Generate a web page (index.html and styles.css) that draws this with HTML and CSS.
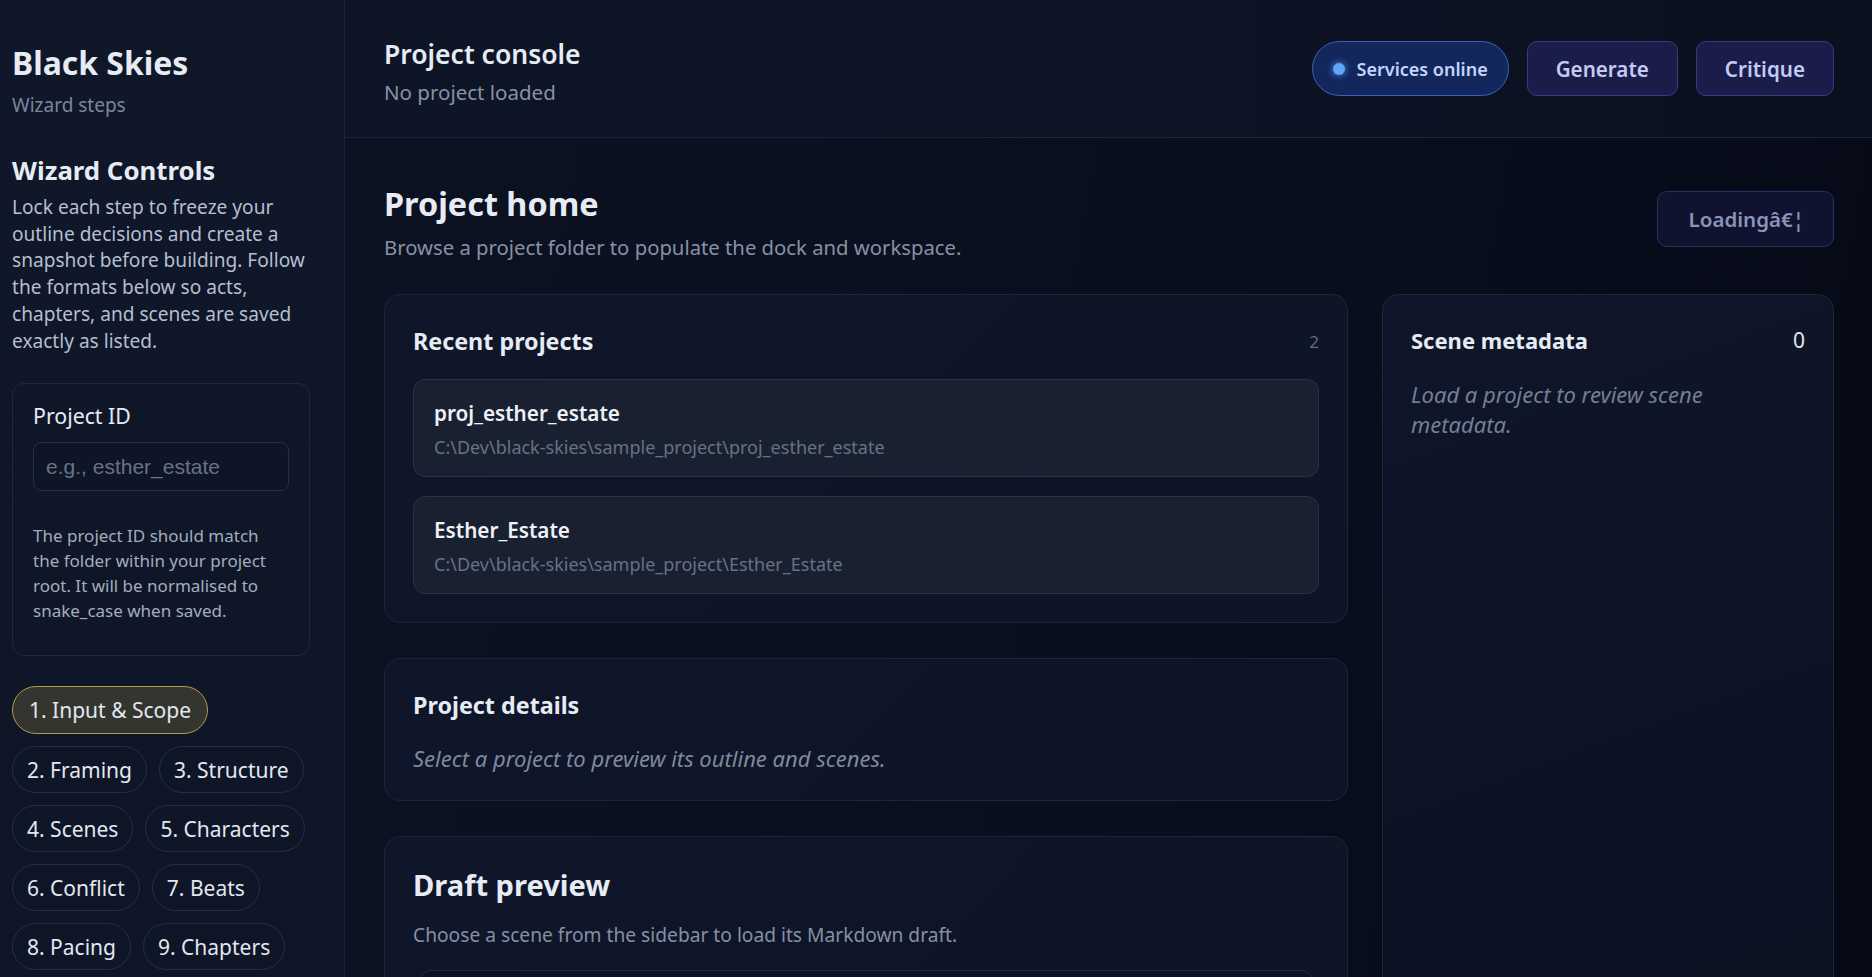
FILE: index.html
```html
<!DOCTYPE html>
<html lang="en">
<head>
<meta charset="utf-8">
<title>Black Skies</title>
<link rel="stylesheet" href="styles.css">
</head>
<body>
<div class="app">
  <aside class="sidebar">
    <h1 class="brand">Black Skies</h1>
    <div class="brand-sub">Wizard steps</div>
    <h2 class="side-title">Wizard Controls</h2>
    <p class="side-desc">Lock each step to freeze your outline decisions and create a snapshot before building. Follow the formats below so acts, chapters, and scenes are saved exactly as listed.</p>
    <div class="id-card">
      <label class="id-label" for="pid">Project ID</label>
      <input id="pid" class="id-input" type="text" placeholder="e.g., esther_estate">
      <p class="id-help">The project ID should match the folder within your project root. It will be normalised to snake_case when saved.</p>
    </div>
    <div class="steps">
      <span class="step active">1. Input &amp; Scope</span>
      <span class="step">2. Framing</span>
      <span class="step">3. Structure</span>
      <span class="step">4. Scenes</span>
      <span class="step">5. Characters</span>
      <span class="step">6. Conflict</span>
      <span class="step">7. Beats</span>
      <span class="step">8. Pacing</span>
      <span class="step">9. Chapters</span>
    </div>
  </aside>
  <main class="main">
    <header class="topbar">
      <div class="topbar-title">
        <div class="console-title">Project console</div>
        <div class="console-sub">No project loaded</div>
      </div>
      <div class="topbar-actions">
        <span class="status-pill"><span class="status-dot"></span>Services online</span>
        <button class="action-btn">Generate</button>
        <button class="action-btn">Critique</button>
      </div>
    </header>
    <section class="workspace">
      <div class="home-head">
        <div>
          <h2 class="home-title">Project home</h2>
          <p class="home-sub">Browse a project folder to populate the dock and workspace.</p>
        </div>
        <button class="loading-btn">Loading&acirc;&euro;&brvbar;</button>
      </div>
      <div class="home-grid">
        <div class="col-left">
          <div class="card recent">
            <div class="card-head">
              <h3 class="card-title">Recent projects</h3>
              <span class="count">2</span>
            </div>
            <div class="project-list">
              <div class="project-item">
                <div class="project-name">proj_esther_estate</div>
                <div class="project-path">C:\Dev\black-skies\sample_project\proj_esther_estate</div>
              </div>
              <div class="project-item">
                <div class="project-name">Esther_Estate</div>
                <div class="project-path">C:\Dev\black-skies\sample_project\Esther_Estate</div>
              </div>
            </div>
          </div>
          <div class="card details">
            <h3 class="card-title">Project details</h3>
            <p class="empty">Select a project to preview its outline and scenes.</p>
          </div>
          <div class="card draft">
            <h3 class="draft-title">Draft preview</h3>
            <p class="draft-sub">Choose a scene from the sidebar to load its Markdown draft.</p>
            <div class="draft-box"></div>
          </div>
        </div>
        <div class="card meta">
          <div class="card-head">
            <h3 class="meta-title">Scene metadata</h3>
            <span class="meta-count">0</span>
          </div>
          <p class="meta-empty">Load a project to review scene metadata.</p>
        </div>
      </div>
    </section>
  </main>
</div>
</body>
</html>
```

FILE: styles.css
```css
* { box-sizing: border-box; }
html, body { margin: 0; padding: 0; height: 100%; }
body {
  font-family: "Noto Sans", "Open Sans", sans-serif;
  background: #080c1a;
  color: #e2e8f0;
  overflow: hidden;
}
.app {
  display: grid;
  grid-template-columns: 345px 1fr;
  height: 100vh;
}
.sidebar {
  background: linear-gradient(180deg, #0f1729 0%, #0e1527 100%);
  border-right: 1px solid #1a2335;
  padding: 44px 34px 0 12px;
  overflow: hidden;
}
.brand {
  margin: 0;
  font-size: 31.9px;
  line-height: 38px;
  font-weight: 700;
  color: #e6ebf4;
}
.brand-sub {
  margin-top: 11px;
  font-size: 19px;
  line-height: 24px;
  color: #7a879c;
}
.side-title {
  margin: 38px 0 0;
  font-size: 25.8px;
  line-height: 30px;
  font-weight: 700;
  color: #e6ebf4;
}
.side-desc {
  margin: 9px 0 0;
  font-size: 19.1px;
  line-height: 26.7px;
  color: #b4bfd0;
}
.id-card {
  margin-top: 29px;
  border: 1px solid #1f293b;
  border-radius: 12px;
  padding: 18px 20px 32px;
  display: flex;
  flex-direction: column;
}
.id-label {
  font-size: 21.3px;
  line-height: 28px;
  color: #e6ebf4;
}
.id-input {
  margin-top: 12px;
  height: 49px;
  width: 100%;
  background: #0e1526;
  border: 1px solid #263146;
  border-radius: 8px;
  padding: 0 12px;
  font-family: "Liberation Sans", Arial, sans-serif;
  font-size: 21px;
  color: #e2e8f0;
}
.id-input::placeholder { color: #687385; }
.id-help {
  margin: 32px 0 0;
  max-width: 245px;
  font-size: 17px;
  line-height: 25px;
  color: #a3adbd;
}
.steps {
  margin-top: 30px;
  width: 320px;
  display: flex;
  flex-wrap: wrap;
  gap: 12px 12px;
}
.step {
  height: 47px;
  display: inline-flex;
  align-items: center;
  padding: 0 14px;
  border: 1px solid #243047;
  border-radius: 999px;
  font-size: 21px;
  color: #e2e8f0;
  white-space: nowrap;
}
.step.active {
  height: 48px;
  padding: 0 16px;
  background: #35352f;
  border-color: #b39a4a;
}
.main {
  display: flex;
  flex-direction: column;
  min-width: 0;
  background: linear-gradient(100deg, #0c1222 0%, #0a0f1e 45%, #060a17 100%);
}
.topbar {
  height: 138px;
  flex: none;
  display: flex;
  align-items: center;
  justify-content: space-between;
  padding: 0 38px 0 39px;
  border-bottom: 1px solid #1c2537;
  background: linear-gradient(90deg, #0e1527 0%, #0d1325 60%, #0b101e 100%);
}
.topbar-title {
  padding-top: 4px;
}
.console-title {
  font-size: 26.5px;
  line-height: 34px;
  font-weight: 600;
  color: #e6ebf4;
}
.console-sub {
  margin-top: 8px;
  font-size: 20.5px;
  line-height: 26px;
  color: #8792a6;
}
.topbar-actions {
  display: flex;
  align-items: center;
  gap: 18px;
}
.status-pill {
  height: 55px;
  display: inline-flex;
  align-items: center;
  gap: 12px;
  padding: 0 20px 0 20px;
  border-radius: 999px;
  background: #13275d;
  border: 1px solid #3a63b6;
  font-size: 18px;
  font-weight: 600;
  color: #c3d4fa;
}
.status-dot {
  width: 12px;
  height: 12px;
  border-radius: 50%;
  background: #60a5fa;
  box-shadow: 0 0 6px 1px rgba(96,165,250,0.6);
}
.action-btn {
  height: 55px;
  padding: 0 28px;
  border-radius: 10px;
  background: #1a1d4a;
  border: 1px solid #373c82;
  font-family: inherit;
  font-size: 20.6px;
  font-weight: 600;
  color: #c5caf4;
}
.workspace {
  padding: 45px 38px 0 39px;
  flex: 1;
  min-height: 0;
}
.home-head {
  display: flex;
  align-items: flex-start;
  justify-content: space-between;
}
.home-title {
  margin: 0;
  font-size: 32.4px;
  line-height: 40px;
  font-weight: 700;
  color: #e6ebf4;
}
.home-sub {
  margin: 10px 0 0;
  font-size: 20.3px;
  line-height: 28px;
  color: #8691a5;
}
.loading-btn {
  margin-top: 8px;
  height: 56px;
  padding: 0 29px 0 31px;
  border-radius: 10px;
  background: #0f1330;
  border: 1px solid #2b3062;
  font-family: inherit;
  font-size: 20.5px;
  font-weight: 600;
  color: #8d93b8;
}
.home-grid {
  margin-top: 33px;
  display: grid;
  grid-template-columns: 1fr 452px;
  gap: 34px;
  align-items: start;
}
.col-left {
  display: flex;
  flex-direction: column;
  gap: 35px;
}
.card {
  background: linear-gradient(135deg, #0f1629 0%, #0d1426 100%);
  border: 1px solid #1c2638;
  border-radius: 16px;
  padding: 30px 28px 28px;
}
.card-head {
  display: flex;
  align-items: center;
  justify-content: space-between;
}
.card-title {
  margin: 0;
  font-size: 23.3px;
  line-height: 32px;
  font-weight: 700;
  color: #e6ebf4;
}
.count {
  font-size: 17px;
  color: #5f6b80;
}
.project-list {
  margin-top: 22px;
  display: flex;
  flex-direction: column;
  gap: 19px;
}
.project-item {
  background: #192131;
  border: 1px solid #28324a;
  border-radius: 12px;
  padding: 19px 20px 17px;
}
.project-name {
  font-size: 20.7px;
  line-height: 28px;
  font-weight: 600;
  color: #eef2f8;
}
.project-path {
  margin-top: 8px;
  font-size: 18px;
  line-height: 24px;
  color: #667286;
}
.empty {
  margin: 23px 0 0;
  font-size: 22px;
  line-height: 28px;
  font-style: italic;
  color: #7e899d;
}
.draft-title {
  margin: 0;
  font-size: 29.1px;
  line-height: 36px;
  font-weight: 700;
  color: #e6ebf4;
}
.draft-sub {
  margin: 18px 0 0;
  font-size: 19.2px;
  line-height: 28px;
  color: #8590a4;
}
.draft-box {
  margin: 21px 6px 0;
  height: 200px;
  border: 1px solid #222c3f;
  border-radius: 12px;
  background: #0c1223;
}
.meta {
  min-height: 720px;
  background: linear-gradient(160deg, #0f1629 0%, #0d1325 60%, #0c1122 100%);
  padding: 30px 28px 28px;
}
.meta-title {
  margin: 0;
  font-size: 22px;
  line-height: 30px;
  font-weight: 700;
  color: #e6ebf4;
}
.meta-count {
  font-size: 21px;
  color: #e2e8f0;
}
.meta-empty {
  margin: 24px 0 0;
  max-width: 340px;
  font-size: 22px;
  line-height: 30px;
  font-style: italic;
  color: #737f94;
}
```
